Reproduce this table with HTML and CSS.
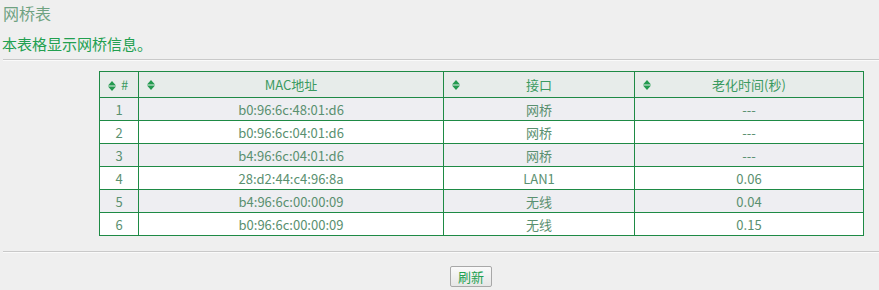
FILE: index.html
```html
<!DOCTYPE html>
<html>
<head>
<meta charset="utf-8">
<link rel="stylesheet" href="styles.css">
</head>
<body>
<div class="title">网桥表</div>
<div class="desc">本表格显示网桥信息。</div>
<div class="rule"></div>
<table class="grid">
  <colgroup>
    <col class="c1"><col class="c2"><col class="c3"><col class="c4">
  </colgroup>
  <thead>
    <tr>
      <th class="hash"><svg class="sort" viewBox="0 0 8 10"><path d="M0 4.5 L4 0 L8 4.5Z M0 5.5 L8 5.5 L4 10Z"/></svg>#</th>
      <th><svg class="sort abs" viewBox="0 0 8 10"><path d="M0 4.5 L4 0 L8 4.5Z M0 5.5 L8 5.5 L4 10Z"/></svg>MAC地址</th>
      <th><svg class="sort abs" viewBox="0 0 8 10"><path d="M0 4.5 L4 0 L8 4.5Z M0 5.5 L8 5.5 L4 10Z"/></svg>接口</th>
      <th><svg class="sort abs" viewBox="0 0 8 10"><path d="M0 4.5 L4 0 L8 4.5Z M0 5.5 L8 5.5 L4 10Z"/></svg>老化时间(秒)</th>
    </tr>
  </thead>
  <tbody>
    <tr class="odd"><td>1</td><td>b0:96:6c:48:01:d6</td><td>网桥</td><td>---</td></tr>
    <tr><td>2</td><td>b0:96:6c:04:01:d6</td><td>网桥</td><td>---</td></tr>
    <tr class="odd"><td>3</td><td>b4:96:6c:04:01:d6</td><td>网桥</td><td>---</td></tr>
    <tr><td>4</td><td>28:d2:44:c4:96:8a</td><td>LAN1</td><td>0.06</td></tr>
    <tr class="odd"><td>5</td><td>b4:96:6c:00:00:09</td><td>无线</td><td>0.04</td></tr>
    <tr><td>6</td><td>b0:96:6c:00:00:09</td><td>无线</td><td>0.15</td></tr>
  </tbody>
</table>
<div class="rule rule2"></div>
<div class="actions"><button class="btn">刷新</button></div>
</body>
</html>
```
FILE: styles.css
```css
html, body {
  margin: 0;
  padding: 0;
  background: #efefef;
  font-family: "Noto Sans CJK SC", "Noto Sans", sans-serif;
}
.title {
  padding-left: 3px;
  height: 26px;
  line-height: 26px;
  font-size: 16px;
  color: #6fa282;
}
.desc {
  margin-top: 7px;
  padding-left: 2px;
  line-height: 22px;
  font-size: 15px;
  color: #22a050;
}
.rule {
  margin: 4px 0 0 3px;
  border-top: 1px solid #c9c9c9;
  border-bottom: 1px solid #fafafa;
}
.grid {
  margin: 10px 0 0 99px;
  width: 764px;
  border-collapse: collapse;
  font-size: 13px;
  color: #5a9070;
  table-layout: fixed;
}
.c1 { width: 39px; }
.c2 { width: 305px; }
.c3 { width: 191px; }
.c4 { width: 229px; }
.grid th, .grid td {
  border: 1px solid #1e8a45;
  text-align: center;
  padding: 0;
}
.grid th {
  height: 25px;
  font-weight: normal;
  background: #e7ecea;
  color: #3a9a60;
  position: relative;
}
.grid td {
  height: 22px;
  background: #fff;
}
.grid tr.odd td {
  background: #eeeef2;
}
.grid th.hash {
  text-align: left;
  padding-left: 8px;
}
.sort {
  display: inline-block;
  width: 8px;
  height: 10px;
  margin-right: 5px;
  vertical-align: -1px;
  fill: #239a4f;
}
.sort.abs {
  position: absolute;
  left: 8px;
  top: 8px;
}
.rule2 {
  margin-top: 15px;
}
.actions {
  margin-top: 10px;
  padding-left: 450px;
}
.btn {
  width: 42px;
  height: 21px;
  padding: 0;
  font-family: "Noto Sans CJK SC", sans-serif;
  font-size: 13px;
  color: #22a050;
  background: linear-gradient(#fafafa, #e6e6e6);
  border: 1px solid #a8a8a8;
  border-radius: 2px;
}
```
